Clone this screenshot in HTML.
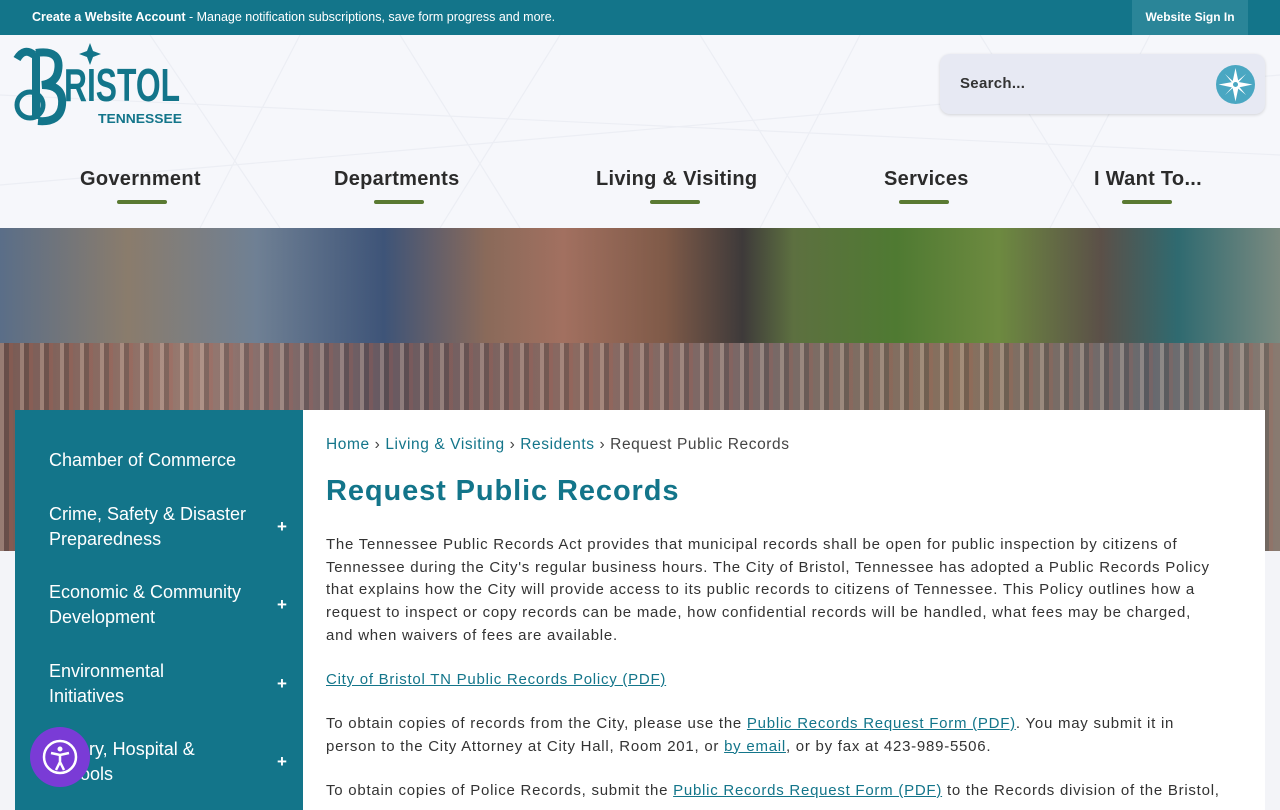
<!DOCTYPE html>
<html><head><meta charset="utf-8"><style>
*{margin:0;padding:0;box-sizing:border-box}
body{width:1280px;height:800px;overflow:hidden;font-family:"Liberation Sans",sans-serif;background:#f3f4f8;position:relative}
.top{height:35px;background:#13758a;color:#fff;font-size:12.5px;position:relative}
.top .msg{position:absolute;left:32px;top:10px}
.top .sign{position:absolute;left:1132px;top:0;width:116px;height:35px;background:#2a8598;font-weight:bold;font-size:12px;text-align:center;line-height:35px}
.header{height:193px;background:#f6f7fb;position:relative;overflow:hidden}
.logo{position:absolute;left:12px;top:6px;color:#13758a}
.search{position:absolute;left:940px;top:19px;width:325px;height:60px;background:#e7e9f3;border-radius:10px;box-shadow:0 1px 3px rgba(0,0,0,.15)}
.search span{position:absolute;left:20px;top:21px;font-size:15px;font-weight:bold;color:#333;letter-spacing:.3px}
.search .ic{position:absolute;left:276px;top:11px;width:39px;height:39px;border-radius:50%;background:#4aa7c2}
.nav a{position:absolute;top:133px;font-size:20px;color:#2b2b2b;font-weight:bold;letter-spacing:.3px;text-decoration:none}
.nav i{position:absolute;top:165px;width:50px;height:4px;background:#5a7a32;border-radius:2px}
.hero{position:absolute;left:0;top:228px;width:1280px;height:323px;overflow:hidden;
background:linear-gradient(90deg,#5a6e88 0,#8a7c6c 10%,#6f8094 20%,#3e5478 30%,#8a6a5a 38%,#a27060 44%,#7f5a48 52%,#3e3a3a 58%,#5d7040 62%,#4f7a32 70%,#6d8a40 78%,#5b5048 86%,#2f6a70 92%,#7a8a80 100%)}
.crowd{position:absolute;left:0;top:115px;width:1280px;height:210px;background:linear-gradient(90deg,#7a5a52,#9a7a70 15%,#6a5a60 30%,#8a6a62 45%,#7a6a6a 60%,#8a7060 75%,#6a6a70 90%,#8a7a70);opacity:.95}
.crowd:after{content:"";position:absolute;inset:0;background:repeating-linear-gradient(90deg,rgba(255,230,210,.25) 0 4px,rgba(0,0,0,.15) 4px 9px,rgba(200,80,60,.15) 9px 13px,rgba(0,0,0,0) 13px 20px)}
.side{position:absolute;left:15px;top:410px;width:288px;height:400px;background:#13758a;color:#fff;font-size:18px;line-height:25px}
.side div{position:absolute;left:34px}
.side b{position:absolute;left:262px;font-size:17px}
.main{position:absolute;left:303px;top:410px;width:962px;height:400px;background:#fff;color:#333;font-size:15px;line-height:22.7px;letter-spacing:.75px}
.main a{color:#13758a;text-decoration:none}
.u{color:#13758a;text-decoration:underline}
.bc{position:absolute;left:23px;top:24px;font-size:15.5px;color:#444;letter-spacing:.6px}
h1{position:absolute;left:23px;top:70px;font-size:29px;color:#13758a;letter-spacing:.9px}
.p{position:absolute;left:23px;width:930px}
.acc{position:absolute;left:30px;top:727px;width:60px;height:60px;border-radius:50%;background:#7a3bd6}
</style></head><body>
<div class="top"><div class="msg"><b>Create a Website Account</b> - Manage notification subscriptions, save form progress and more.</div><div class="sign">Website Sign In</div></div>
<div class="header">
<svg width="1280" height="193" style="position:absolute;left:0;top:0" stroke="#eceef4" fill="none" stroke-width="1.2"><path d="M150 0L280 193M300 0L200 193M400 0L520 193M560 0L440 193M700 0L820 193M860 0L760 193M980 0L1100 193M1150 0L1050 193M0 60L1280 120M0 150L1280 40"/></svg>
<div class="logo"><svg width="175" height="95" viewBox="0 0 175 95"><circle cx="18" cy="64" r="13" fill="none" stroke="#13758a" stroke-width="5"/><path d="M22 14q-10-8-17 4M24 12v66M24 12q26-4 22 18q-2 12-16 14q22 0 20 20q-2 18-24 16" fill="none" stroke="#13758a" stroke-width="8"/><text x="52" y="60" font-size="46" font-weight="bold" fill="#13758a" textLength="116" lengthAdjust="spacingAndGlyphs">RISTOL</text><path d="M78 2l3 8 8 3-8 3-3 8-3-8-8-3 8-3z" fill="#13758a"/><text x="86" y="82" font-size="13" font-weight="bold" fill="#13758a" textLength="84" lengthAdjust="spacingAndGlyphs">TENNESSEE</text></svg></div>
<div class="search"><span>Search...</span><div class="ic"><svg width="39" height="39" viewBox="0 0 39 39"><path d="M19.5 3l3 14 14 2.5-14 3-3 14-3-14-14-3 14-2.5z M9 9l10 9 11-9-9 10 9 11-11-9-10 9 9-10z" fill="#fff"/><circle cx="19.5" cy="19.5" r="3" fill="#4aa7c2" stroke="#fff"/></svg></div></div>
<div class="nav"><a style="left:80px">Government</a><i style="left:117px"></i><a style="left:334px">Departments</a><i style="left:374px"></i><a style="left:596px">Living &amp; Visiting</a><i style="left:650px"></i><a style="left:884px">Services</a><i style="left:899px"></i><a style="left:1094px">I Want To...</a><i style="left:1122px"></i></div>
</div>
<div class="hero"><div class="crowd"></div></div>
<div class="side">
<div style="top:38px">Chamber of Commerce</div>
<div style="top:92px">Crime, Safety &amp; Disaster<br>Preparedness</div><b style="top:104px">+</b>
<div style="top:170px">Economic &amp; Community<br>Development</div><b style="top:182px">+</b>
<div style="top:249px">Environmental<br>Initiatives</div><b style="top:261px">+</b>
<div style="top:327px">Library, Hospital &amp;<br>Schools</div><b style="top:339px">+</b>
</div>
<div class="main">
<div class="bc"><a>Home</a> › <a>Living &amp; Visiting</a> › <a>Residents</a> › Request Public Records</div>
<h1>Request Public Records</h1>
<div class="p" style="top:124px">The Tennessee Public Records Act provides that municipal records shall be open for public inspection by citizens of<br>Tennessee during the City's regular business hours. The City of Bristol, Tennessee has adopted a Public Records Policy<br>that explains how the City will provide access to its public records to citizens of Tennessee. This Policy outlines how a<br>request to inspect or copy records can be made, how confidential records will be handled, what fees may be charged,<br>and when waivers of fees are available.</div>
<div class="p" style="top:259px"><span class="u">City of Bristol TN Public Records Policy (PDF)</span></div>
<div class="p" style="top:303px">To obtain copies of records from the City, please use the <span class="u">Public Records Request Form (PDF)</span>. You may submit it in<br>person to the City Attorney at City Hall, Room 201, or <span class="u">by email</span>, or by fax at 423-989-5506.</div>
<div class="p" style="top:370px">To obtain copies of Police Records, submit the <span class="u">Public Records Request Form (PDF)</span> to the Records division of the Bristol,</div>
</div>
<div class="acc"><svg width="60" height="60" viewBox="0 0 60 60"><circle cx="30" cy="30" r="16" fill="none" stroke="#fff" stroke-width="2.5"/><circle cx="30" cy="22" r="2.5" fill="#fff"/><path d="M21 26l9 2 9-2M30 28v7l-4 8M30 35l4 8" stroke="#fff" stroke-width="2.5" fill="none"/></svg></div>
</body></html>
